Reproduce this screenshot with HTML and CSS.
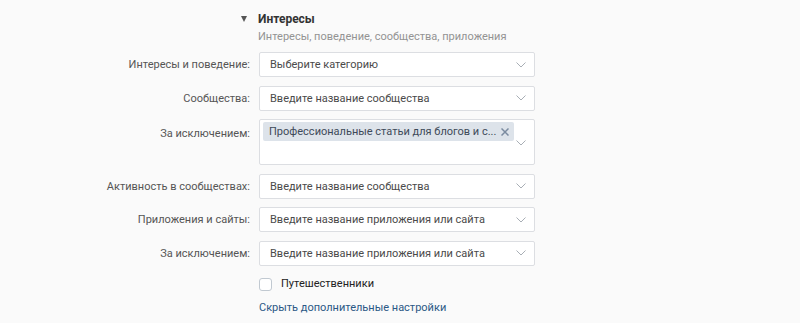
FILE: index.html
```html
<!DOCTYPE html>
<html lang="ru">
<head>
    <meta charset="UTF-8">
    <title>Интересы</title>
    <link rel="stylesheet" href="styles.css">
</head>
<body>
    <div class="section">
        <div class="section-head">
            <span class="toggle"></span>
            <div>
                <div class="section-title">Интересы</div>
                <div class="section-sub">Интересы, поведение, сообщества, приложения</div>
            </div>
        </div>

        <div class="form">
            <label class="label">Интересы и поведение:</label>
            <div class="select"><span>Выберите категорию</span><svg class="chevron" viewBox="0 0 10 6"><path d="M0.5 0.5 L5 5 L9.5 0.5"/></svg></div>

            <label class="label">Сообщества:</label>
            <div class="select"><span>Введите название сообщества</span><svg class="chevron" viewBox="0 0 10 6"><path d="M0.5 0.5 L5 5 L9.5 0.5"/></svg></div>

            <label class="label label-top">За исключением:</label>
            <div class="select select-tags">
                <div class="tags">
                    <span class="tag">Профессиональные статьи для блогов и с...
                        <svg class="tag-x" viewBox="0 0 8 8"><path d="M0.5 0.5 L7.5 7.5 M7.5 0.5 L0.5 7.5"/></svg>
                    </span>
                </div>
                <svg class="chevron" viewBox="0 0 10 6"><path d="M0.5 0.5 L5 5 L9.5 0.5"/></svg>
            </div>

            <label class="label">Активность в сообществах:</label>
            <div class="select"><span>Введите название сообщества</span><svg class="chevron" viewBox="0 0 10 6"><path d="M0.5 0.5 L5 5 L9.5 0.5"/></svg></div>

            <label class="label">Приложения и сайты:</label>
            <div class="select"><span>Введите название приложения или сайта</span><svg class="chevron" viewBox="0 0 10 6"><path d="M0.5 0.5 L5 5 L9.5 0.5"/></svg></div>

            <label class="label">За исключением:</label>
            <div class="select"><span>Введите название приложения или сайта</span><svg class="chevron" viewBox="0 0 10 6"><path d="M0.5 0.5 L5 5 L9.5 0.5"/></svg></div>

            <div></div>
            <label class="check"><span class="box"></span>Путешественники</label>

            <div></div>
            <a class="more" href="#">Скрыть дополнительные настройки</a>
        </div>
    </div>
</body>
</html>
```

FILE: styles.css
```css
body {
    margin: 0;
    background-color: #fafafa;
    font-family: Roboto, "Open Sans", Arial, sans-serif;
    font-size: 11px;
    color: #222;
}
.section {
    padding-top: 11px;
}
.section-head {
    display: flex;
    margin-left: 241px;
    gap: 11px;
}
.toggle {
    width: 0;
    height: 0;
    margin-top: 5px;
    border-left: 3.5px solid transparent;
    border-right: 3.5px solid transparent;
    border-top: 6px solid #555;
}
.section-title {
    font-weight: bold;
    font-size: 12px;
    color: #333;
    line-height: 16px;
}
.section-sub {
    color: #939393;
    margin-top: 2px;
    line-height: 16px;
}
.form {
    display: grid;
    grid-template-columns: 250px 276px;
    column-gap: 9px;
    row-gap: 8.5px;
    margin-top: 7px;
}
.label {
    text-align: right;
    color: #555;
    line-height: 25px;
}
.label-top {
    line-height: 29px;
}
.select {
    box-sizing: border-box;
    height: 25px;
    background-color: #fff;
    border: 1px solid #dcdee2;
    border-radius: 2px;
    display: flex;
    align-items: center;
    justify-content: space-between;
    padding: 0 8px 0 10px;
    color: #4a4a4a;
}
.chevron {
    width: 10px;
    height: 6px;
    fill: none;
    stroke: #a8aeb5;
    stroke-width: 1;
}
.select-tags {
    height: 46px;
    align-items: flex-start;
    padding: 2px 8px 0 3px;
}
.select-tags .chevron {
    align-self: center;
}
.tag {
    display: inline-flex;
    align-items: center;
    gap: 5px;
    height: 19px;
    padding: 0 5px 0 6px;
    white-space: nowrap;
    background-color: #dde3ea;
    border-radius: 2px;
    color: #3d4a59;
}
.tag-x {
    width: 8px;
    height: 8px;
    fill: none;
    stroke: #7b8ba0;
    stroke-width: 1.5;
}
.check {
    display: flex;
    align-items: center;
    gap: 9px;
    margin-top: 3px;
    color: #222;
    line-height: 14px;
}
.box {
    box-sizing: border-box;
    width: 13px;
    height: 13px;
    border: 1px solid #c1c9d1;
    border-radius: 3px;
    background-color: #fff;
}
.more {
    color: #2a5885;
    text-decoration: none;
    margin-top: 1px;
}
```
